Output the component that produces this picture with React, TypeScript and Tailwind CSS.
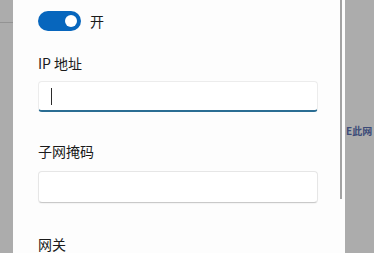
import React from "react";

export default function App() {
  const font = { fontFamily: '"Noto Sans CJK SC", "Noto Sans", sans-serif' };
  return (
    <div className="w-[374px] h-[253px] flex overflow-hidden bg-[#acacac]" style={font}>
      {/* left dimmed strip */}
      <div className="w-[13px] h-full flex flex-col bg-[#acacac]">
        <div className="h-[22px]" />
        <div className="h-px bg-[#939393]" />
      </div>
      {/* panel */}
      <div className="w-[332px] h-full bg-[#fdfdfd] flex">
        <div className="w-[327px] pl-[25px] flex flex-col">
          <div className="h-[11px]" />
          <div className="flex items-center h-[20px]">
            <div className="w-[43px] h-[20px] rounded-full bg-[#0766bd] flex items-center justify-end pr-[4px]">
              <div className="w-[12px] h-[12px] rounded-full bg-white" />
            </div>
            <span className="ml-[9px] text-[14px] leading-[18px] text-[#1b1b1b]">开</span>
          </div>
          <div className="mt-[23px] text-[14px] leading-[18px] text-[#1b1b1b]">IP 地址</div>
          <div className="mt-[9px] w-[280px] h-[32px] rounded-[4px] border border-[#ececec] border-b-2 border-b-[#2a6d93] bg-white flex items-center pl-[12px]">
            <div className="w-px h-[17px] bg-[#2b2b2b]" />
          </div>
          <div className="mt-[30px] text-[14px] leading-[18px] text-[#1b1b1b]">子网掩码</div>
          <div className="mt-[11px] w-[280px] h-[32px] rounded-[4px] border border-[#e6e6e6] border-b-[#c9c9c9] bg-white shadow-[0_1px_1px_rgba(0,0,0,0.04)]" />
          <div className="mt-[32px] text-[14px] leading-[18px] text-[#1b1b1b]">网关</div>
        </div>
        <div className="w-[2px] h-[199px] bg-[#a3a3a3]" />
        <div className="w-[3px]" />
      </div>
      {/* right dimmed area */}
      <div className="flex-1 h-full overflow-hidden">
        <div className="mt-[124px] pl-px text-[10px] leading-[14px] font-bold text-[#3c4b78] whitespace-nowrap">E此网</div>
      </div>
    </div>
  );
}
